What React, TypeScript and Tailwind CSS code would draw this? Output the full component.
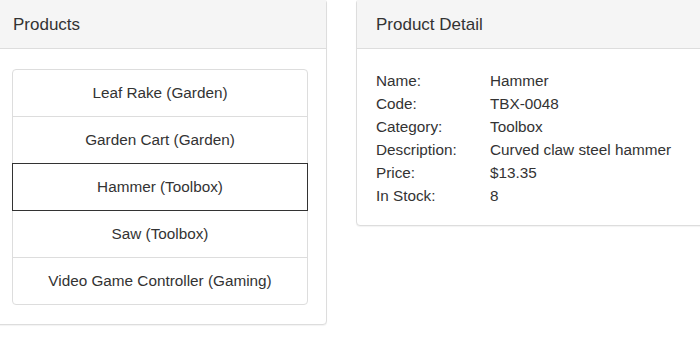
import React from "react";

const products = [
  "Leaf Rake (Garden)",
  "Garden Cart (Garden)",
  "Hammer (Toolbox)",
  "Saw (Toolbox)",
  "Video Game Controller (Gaming)",
];

const details: [string, string][] = [
  ["Name:", "Hammer"],
  ["Code:", "TBX-0048"],
  ["Category:", "Toolbox"],
  ["Description:", "Curved claw steel hammer"],
  ["Price:", "$13.35"],
  ["In Stock:", "8"],
];

export default function App() {
  return (
    <div
      className="w-[700px] h-[340px] overflow-hidden bg-white text-[#333]"
      style={{ fontFamily: '"Liberation Sans", Arial, sans-serif' }}
    >
      <div className="flex items-start gap-[29px] ml-[-7px] mt-[-1px]">
        <div className="w-[334px] shrink-0 border border-[#ddd] rounded-[4px] bg-white shadow-[0_1px_1px_rgba(0,0,0,0.05)]">
          <div className="h-[49px] bg-[#f5f5f5] border-b border-[#ddd] pl-[19px] flex items-center text-[17px] leading-none">
            Products
          </div>
          <div className="px-[18px] pt-[20px] pb-[19px]">
            <div className="flex flex-col">
              {products.map((p, i) => (
                <div
                  key={p}
                  className={
                    "h-[48px] flex items-center justify-center text-[15.3px] border " +
                    (i > 0 ? "mt-[-1px] " : "rounded-t-[4px] ") +
                    (i === products.length - 1 ? "rounded-b-[4px] " : "") +
                    (i === 2 ? "relative z-10 border-[#333]" : "border-[#ddd]")
                  }
                >
                  {p}
                </div>
              ))}
            </div>
          </div>
        </div>
        <div className="w-[400px] shrink-0 border border-[#ddd] rounded-[4px] bg-white shadow-[0_1px_1px_rgba(0,0,0,0.05)]">
          <div className="h-[49px] bg-[#f5f5f5] border-b border-[#ddd] pl-[19px] flex items-center text-[17px] leading-none">
            Product Detail
          </div>
          <div className="pl-[19px] pt-[20px] pb-[18px]">
            {details.map(([k, v]) => (
              <div key={k} className="flex text-[15.3px] leading-[23px]">
                <div className="w-[114px] shrink-0">{k}</div>
                <div>{v}</div>
              </div>
            ))}
          </div>
        </div>
      </div>
    </div>
  );
}
